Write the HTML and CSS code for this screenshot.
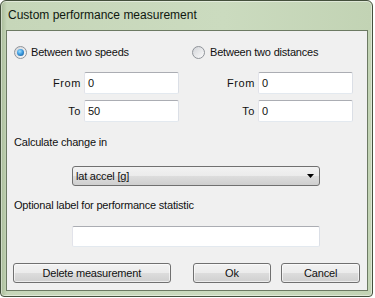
FILE: index.html
```html
<!doctype html>
<html lang="en">
<head>
    <meta charset="UTF-8">
    <title>Custom performance measurement</title>
    <link rel="stylesheet" href="styles.css">
</head>
<body>
    <div class="window">
        <div class="titlebar">Custom performance measurement</div>
        <div class="client">
            <div class="modes">
                <div class="mode mode-left">
                    <label class="radio-row">
                        <span class="radio checked"><span class="dot"></span></span>
                        Between two speeds
                    </label>
                    <div class="fields">
                        <div class="field"><span class="field-label">From</span><span class="textbox">0</span></div>
                        <div class="field"><span class="field-label">To</span><span class="textbox">50</span></div>
                    </div>
                </div>
                <div class="mode mode-right">
                    <label class="radio-row">
                        <span class="radio"></span>
                        Between two distances
                    </label>
                    <div class="fields">
                        <div class="field"><span class="field-label">From</span><span class="textbox">0</span></div>
                        <div class="field"><span class="field-label">To</span><span class="textbox">0</span></div>
                    </div>
                </div>
            </div>

            <div class="caption calc-caption">Calculate change in</div>
            <div class="combo">
                <span class="combo-text">lat accel [g]</span>
                <svg class="combo-arrow" width="7" height="4" viewBox="0 0 7 4"><path d="M0 0h7L3.5 4z" fill="#000"/></svg>
            </div>

            <div class="caption label-caption">Optional label for performance statistic</div>
            <div class="textbox wide"></div>

            <div class="buttons">
                <div class="button btn-delete">Delete measurement</div>
                <div class="button btn-ok">Ok</div>
                <div class="button btn-cancel">Cancel</div>
            </div>
        </div>
    </div>
</body>
</html>
```

FILE: styles.css
```css
body {
    margin: 0;
    background: #fff;
    font-family: "Liberation Sans", Arial, sans-serif;
    font-size: 11px;
    letter-spacing: -0.2px;
    color: #111;
}
.window {
    box-sizing: border-box;
    width: 373px;
    height: 297px;
    border: 1px solid #44503c;
    border-radius: 6px 6px 4px 4px;
    padding: 0 4px 0 5px;
    background: linear-gradient(to right, #a8bb98 0px, #c6d6b9 6px, #cbdbbf 60%, #c2d3b4 100%);
    box-shadow: inset 0 0 0 1px rgba(255, 255, 255, 0.45);
}
.titlebar {
    height: 29px;
    line-height: 29px;
    padding-left: 2px;
    font-size: 12px;
    letter-spacing: 0;
    color: #101810;
}
.client {
    box-sizing: border-box;
    width: 362px;
    height: 261px;
    border: 1px solid #6c7a63;
    background: #f0f0f0;
    padding: 14px 7px 0 7px;
}
.modes {
    display: grid;
    grid-template-columns: 178px 1fr;
}
.radio-row {
    display: flex;
    align-items: center;
    height: 14px;
    gap: 4px;
}
.mode-right .radio-row {
    gap: 5px;
}
.radio {
    box-sizing: border-box;
    width: 13px;
    height: 13px;
    border-radius: 50%;
    border: 1px solid #8f9399;
    background: linear-gradient(135deg, #d2d4d8, #fbfbfb);
    display: flex;
    align-items: center;
    justify-content: center;
}
.radio .dot {
    width: 7px;
    height: 7px;
    border-radius: 50%;
    background: radial-gradient(circle at 40% 35%, #9ee0ff 0%, #3d9be0 45%, #0e4f8a 100%);
}
.fields {
    margin-top: 13px;
    display: flex;
    flex-direction: column;
    gap: 6px;
}
.field {
    display: flex;
    align-items: center;
}
.field-label {
    text-align: right;
    margin-right: 3px;
    letter-spacing: 0.6px;
}
.mode-left .field-label {
    width: 67px;
}
.mode-right .field-label {
    width: 63px;
}
.textbox {
    box-sizing: border-box;
    width: 95px;
    height: 22px;
    line-height: 20px;
    padding-left: 3px;
    background: #fff;
    border: 1px solid;
    border-color: #abadb3 #dbdfe6 #e3e9ef #e2e3ea;
    border-radius: 2px;
}
.caption {
    height: 14px;
    line-height: 14px;
}
.calc-caption {
    margin-top: 13px;
}
.combo {
    box-sizing: border-box;
    width: 248px;
    height: 20px;
    margin: 17px 0 0 58px;
    border: 1px solid #707070;
    border-radius: 3px;
    background: linear-gradient(#f2f2f2 0%, #ebebeb 50%, #dddddd 50%, #cfcfcf 100%);
    display: flex;
    align-items: center;
    justify-content: space-between;
    padding: 0 5px 0 3px;
}
.combo-arrow {
    display: block;
}
.label-caption {
    margin-top: 12px;
}
.textbox.wide {
    width: 248px;
    height: 21px;
    margin: 14px 0 0 58px;
}
.buttons {
    display: flex;
    margin: 16px 0 0 -1px;
}
.button {
    box-sizing: border-box;
    height: 20px;
    line-height: 18px;
    text-align: center;
    border: 1px solid #707070;
    border-radius: 3px;
    background: linear-gradient(#f2f2f2 0%, #ebebeb 50%, #dddddd 50%, #cfcfcf 100%);
    box-shadow: inset 0 0 0 1px rgba(255, 255, 255, 0.6);
}
.btn-delete {
    width: 158px;
}
.btn-ok {
    width: 79px;
    margin-left: 22px;
}
.btn-cancel {
    width: 79px;
    margin-left: 10px;
}
```
